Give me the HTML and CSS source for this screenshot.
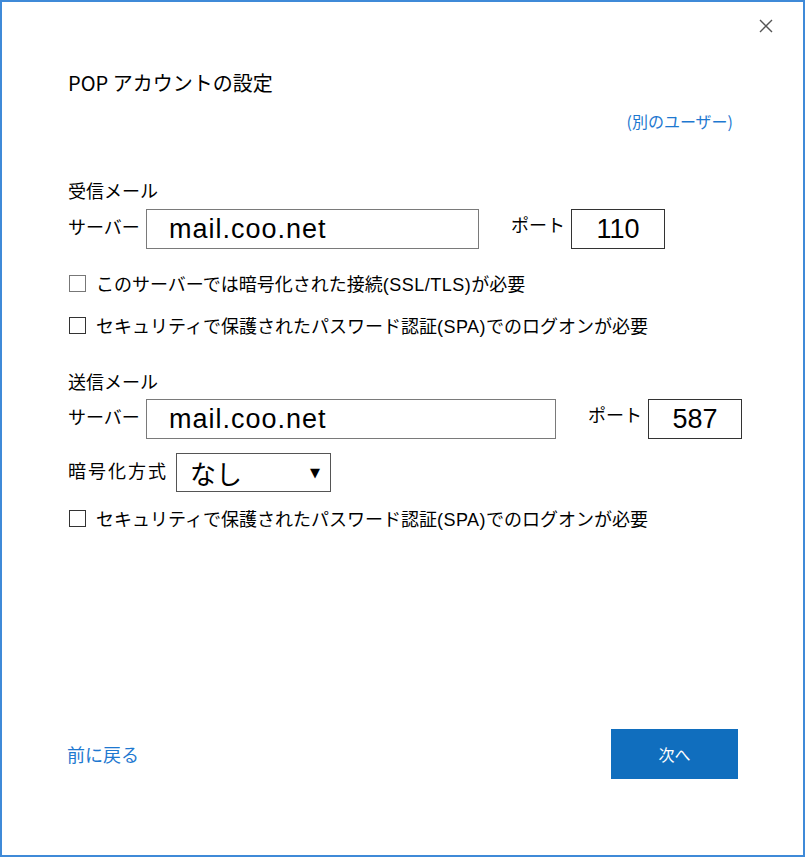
FILE: index.html
```html
<!DOCTYPE html>
<html lang="ja">
  <head>
    <meta charset="UTF-8" />
    <meta name="viewport" content="width=device-width, initial-scale=1.0" />
    <title>POP アカウントの設定</title>

    <link rel="stylesheet" href="styles.css">
  </head>
  <body>
    <div class="window">
      <div class="titlebar">
        <button class="close" aria-label="閉じる">
          <svg width="14" height="14" viewBox="0 0 14 14">
            <path d="M1 1 L13 13 M13 1 L1 13" stroke="#555" stroke-width="1.4" fill="none" />
          </svg>
        </button>
      </div>

      <h1>POP アカウントの設定</h1>
      <div class="alt-user"><a href="#">(別のユーザー)</a></div>

      <!-- 受信メール -->
      <div class="section incoming">
        <h2>受信メール</h2>
        <div class="field-row">
          <span class="field-label">サーバー</span>
          <div class="textbox server-in">mail.coo.net</div>
          <span class="port-label">ポート</span>
          <div class="textbox port">110</div>
        </div>
        <label class="check first">
          <span class="box gray"></span>
          <span>このサーバーでは暗号化された接続<span class="latin">(SSL/TLS)</span>が必要</span>
        </label>
        <label class="check">
          <span class="box"></span>
          <span>セキュリティで保護されたパスワード認証<span class="latin">(SPA)</span>でのログオンが必要</span>
        </label>
      </div>

      <!-- 送信メール -->
      <div class="section outgoing">
        <h2>送信メール</h2>
        <div class="field-row">
          <span class="field-label">サーバー</span>
          <div class="textbox server-out">mail.coo.net</div>
          <span class="port-label">ポート</span>
          <div class="textbox port">587</div>
        </div>
        <div class="field-row select-row">
          <span class="field-label wide">暗号化方式</span>
          <div class="select">
            <span>なし</span>
            <span class="arrow">▼</span>
          </div>
        </div>
        <label class="check first">
          <span class="box"></span>
          <span>セキュリティで保護されたパスワード認証<span class="latin">(SPA)</span>でのログオンが必要</span>
        </label>
      </div>

      <div class="footer">
        <a href="#" class="back">前に戻る</a>
        <button class="next">次へ</button>
      </div>
    </div>
  </body>
</html>
```

FILE: styles.css
```css
body {
  margin: 0;
  padding: 0;
  font-family: "Noto Sans CJK JP", "Liberation Sans", sans-serif;
  color: #000;
  background: #fff;
}
.window {
  box-sizing: border-box;
  width: 805px;
  height: 857px;
  border: 2px solid #3f8ad8;
  display: flex;
  flex-direction: column;
  padding: 0 0 76px 64px;
}
.titlebar {
  height: 48px;
  display: flex;
  justify-content: flex-end;
  align-items: center;
  padding-right: 30px;
}
.close {
  border: none;
  background: none;
  padding: 0;
  width: 14px;
  height: 14px;
  display: flex;
  cursor: pointer;
}
h1 {
  margin: 19px 0 0 2px;
  font-size: 20px;
  line-height: 28px;
  font-weight: normal;
}
.alt-user {
  margin-top: 13px;
  text-align: right;
  padding-right: 70px;
  font-size: 16px;
  line-height: 22px;
}
.alt-user a,
.back {
  color: #1e78d0;
  text-decoration: none;
}
h2 {
  margin: 0 0 8px 2px;
  font-size: 18px;
  line-height: 22px;
  font-weight: normal;
}
.incoming {
  margin-top: 47px;
}
.outgoing {
  margin-top: 33px;
}
.outgoing h2 {
  margin-bottom: 7px;
}
.field-row {
  display: flex;
  align-items: center;
  font-size: 18px;
}
.field-label {
  width: 80px;
  padding-left: 2px;
  box-sizing: border-box;
  align-self: flex-start;
  margin-top: 4px;
}
.field-label.wide {
  width: 110px;
  letter-spacing: 2px;
}
.textbox {
  box-sizing: border-box;
  height: 40px;
  border: 1px solid #7a7a7a;
  font-family: "Liberation Sans", sans-serif;
  font-size: 27px;
  letter-spacing: 1px;
  display: flex;
  align-items: center;
  padding-left: 22px;
}
.server-in {
  width: 333px;
}
.server-out {
  width: 410px;
}
.port-label {
  width: 60px;
  margin-left: 32px;
  align-self: flex-start;
  margin-top: 2px;
}
.textbox.port {
  width: 94px;
  padding: 0;
  justify-content: center;
  letter-spacing: 0;
  border-color: #333;
}
.select-row {
  margin-top: 14px;
}
.select {
  box-sizing: border-box;
  width: 155px;
  height: 39px;
  border: 1px solid #555;
  display: flex;
  align-items: center;
  justify-content: space-between;
  padding: 0 10px 0 13px;
  font-size: 26px;
}
.arrow {
  font-size: 13px;
  font-family: "DejaVu Sans", sans-serif;
}
.check {
  display: flex;
  align-items: center;
  gap: 10px;
  height: 24px;
  margin-top: 18px;
  margin-left: 3px;
  font-size: 18px;
  line-height: 24px;
}
.check .latin {
  font-family: "Liberation Sans", sans-serif;
  letter-spacing: 0.5px;
  line-height: 1;
}
.check.first {
  margin-top: 22px;
}
.outgoing .check.first {
  margin-top: 14px;
}
.box {
  box-sizing: border-box;
  width: 17px;
  height: 17px;
  border: 1px solid #333;
  flex-shrink: 0;
}
.box.gray {
  border-color: #777;
}
.footer {
  margin-top: auto;
  display: flex;
  justify-content: space-between;
  align-items: center;
  padding: 0 65px 0 1px;
}
.back {
  font-size: 18px;
}
.next {
  width: 127px;
  height: 50px;
  border: none;
  background-color: #106ebe;
  color: #fff;
  font-family: "Noto Sans CJK JP", sans-serif;
  font-size: 16px;
  cursor: pointer;
}
```
